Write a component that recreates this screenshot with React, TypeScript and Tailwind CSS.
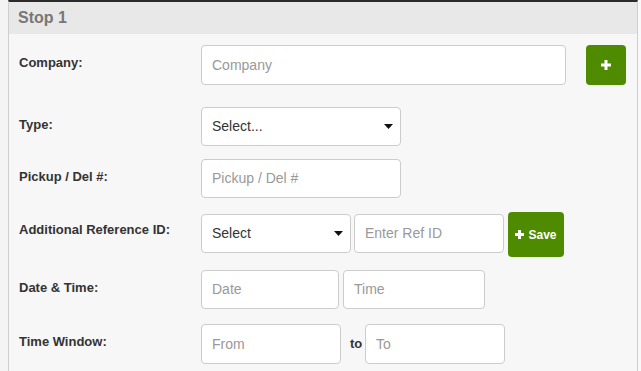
import React from "react";

const Plus = ({ size = 10, stroke = 3 }: { size?: number; stroke?: number }) => (
  <svg width={size} height={size} viewBox={`0 0 ${size} ${size}`} className="block">
    <rect x={(size - stroke) / 2} y={0} width={stroke} height={size} fill="#fff" />
    <rect x={0} y={(size - stroke) / 2} width={size} height={stroke} fill="#fff" />
  </svg>
);

const Caret = () => (
  <svg width="9" height="5" viewBox="0 0 9 5" className="block">
    <path d="M0 0 H9 L4.5 5 Z" fill="#111" />
  </svg>
);

const Label = ({ children }: { children: React.ReactNode }) => (
  <div className="w-[182px] shrink-0 pt-[10px] text-[13px] leading-[15px] font-bold text-[#333]">{children}</div>
);

const Field = ({ w, text, value = false, className = "" }: { w: string; text: string; value?: boolean; className?: string }) => (
  <div
    className={`${w} h-[39px] shrink-0 flex items-center pl-[10px] bg-white border border-[#cccccc] rounded-[4px] text-[14px] ${value ? "text-[#555]" : "text-[#999]"} ${className}`}
  >
    {text}
  </div>
);

const SelectBox = ({ w, text, className = "" }: { w: string; text: string; className?: string }) => (
  <div
    className={`${w} h-[39px] shrink-0 flex items-center justify-between pl-[10px] pr-[7px] bg-white border border-[#cccccc] rounded-[4px] text-[14px] text-[#333] ${className}`}
  >
    <span>{text}</span>
    <Caret />
  </div>
);

export default function App() {
  return (
    <div className="w-[641px] h-[371px] overflow-hidden flex bg-[#f4f4f4] font-['Liberation_Sans',Arial,sans-serif]">
      <div className="w-[8px] shrink-0 bg-[#f4f4f4]" />
      <div className="w-[630px] shrink-0 h-full flex flex-col bg-[#f7f7f7] border-l border-r border-[#cfcfcf] border-t-2 border-t-[#2b2b2b]">
        <div className="h-[32px] shrink-0 bg-[#e8e8e8] pl-[9px] flex items-center text-[16px] font-bold text-[#777]">
          Stop 1
        </div>
        <div className="pl-[10px] flex flex-col">
          <div className="mt-[11px] flex items-start">
            <Label>Company:</Label>
            <Field w="w-[365px]" text="Company" className="h-[40px]" />
            <div className="ml-[20px] w-[40px] h-[40px] rounded-[4px] bg-[#4e8b00] flex items-center justify-center">
              <Plus size={10} stroke={3} />
            </div>
          </div>
          <div className="mt-[22px] flex items-start">
            <Label>Type:</Label>
            <SelectBox w="w-[200px]" text="Select..." />
          </div>
          <div className="mt-[13px] flex items-start">
            <Label>Pickup / Del #:</Label>
            <Field w="w-[200px]" text="Pickup / Del #" />
          </div>
          <div className="mt-[14px] flex items-start h-[45px]">
            <Label>Additional Reference ID:</Label>
            <SelectBox w="w-[150px]" text="Select" className="mt-[2px]" />
            <Field w="w-[150px]" text="Enter Ref ID" className="mt-[2px] ml-[3px]" />
            <div className="ml-[4px] w-[56px] h-[45px] rounded-[4px] bg-[#4e8b00] flex items-center justify-center gap-[4px] text-white text-[12px] font-bold">
              <Plus size={9} stroke={3} />
              <span>Save</span>
            </div>
          </div>
          <div className="mt-[13px] flex items-start">
            <Label>Date &amp; Time:</Label>
            <Field w="w-[138px]" text="Date" />
            <Field w="w-[142px]" text="Time" className="ml-[4px]" />
          </div>
          <div className="mt-[15px] flex items-start">
            <Label>Time Window:</Label>
            <Field w="w-[140px]" text="From" className="h-[40px]" />
            <div className="w-[24px] shrink-0 pt-[12px] pl-[9px] text-[13px] leading-[15px] font-bold text-[#333]">to</div>
            <Field w="w-[140px]" text="To" className="h-[40px]" />
          </div>
        </div>
      </div>
      <div className="flex-1 bg-[#f9f9f9]" />
    </div>
  );
}
